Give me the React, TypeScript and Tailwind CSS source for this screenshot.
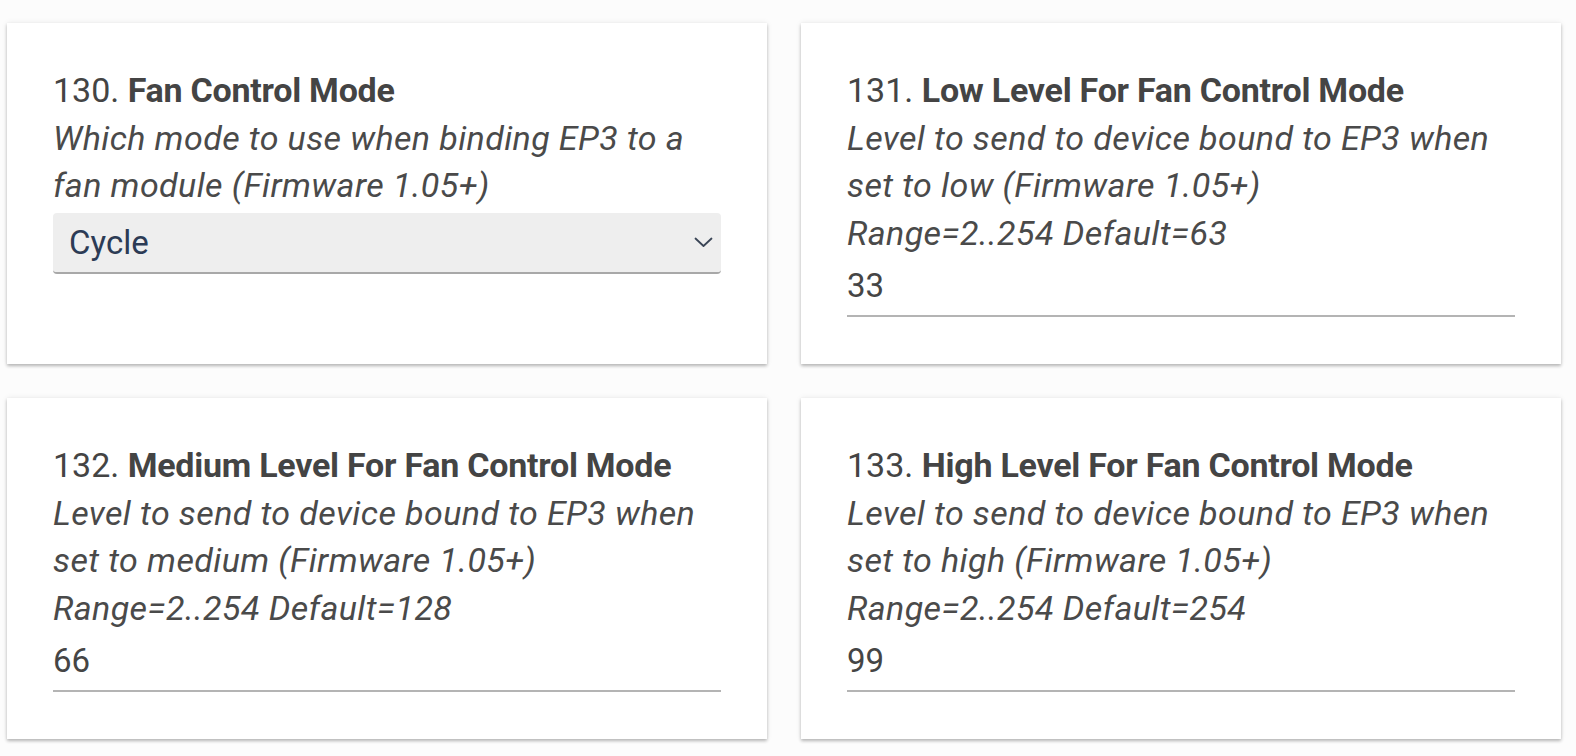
import React from "react";

type Item = {
  num: string;
  title: string;
  desc: string[];
  select?: string;
  value?: string;
};

const items: Item[] = [
  {
    num: "130.",
    title: "Fan Control Mode",
    desc: ["Which mode to use when binding EP3 to a", "fan module (Firmware 1.05+)"],
    select: "Cycle",
  },
  {
    num: "131.",
    title: "Low Level For Fan Control Mode",
    desc: [
      "Level to send to device bound to EP3 when",
      "set to low (Firmware 1.05+)",
      "Range=2..254 Default=63",
    ],
    value: "33",
  },
  {
    num: "132.",
    title: "Medium Level For Fan Control Mode",
    desc: [
      "Level to send to device bound to EP3 when",
      "set to medium (Firmware 1.05+)",
      "Range=2..254 Default=128",
    ],
    value: "66",
  },
  {
    num: "133.",
    title: "High Level For Fan Control Mode",
    desc: [
      "Level to send to device bound to EP3 when",
      "set to high (Firmware 1.05+)",
      "Range=2..254 Default=254",
    ],
    value: "99",
  },
];

function Card({ item }: { item: Item }) {
  return (
    <div className="bg-white shadow-[0_2px_3px_rgba(0,0,0,0.25),0_0_6px_rgba(0,0,0,0.08)] pt-[44px] pb-[47px] px-[46px] text-[34px] leading-[47.7px] text-[#444444]">
      <div className="whitespace-nowrap">
        <span className="font-normal">{item.num} </span>
        <span className="font-bold tracking-[-0.25px]">{item.title}</span>
      </div>
      <div className="italic text-[#4a4a4a] tracking-[0.4px]">
        {item.desc.map((d, i) => (
          <div key={i} className="whitespace-nowrap">
            {d}
          </div>
        ))}
      </div>
      {item.select && (
        <div className="mt-[3px] h-[61px] bg-[#eeeeee] rounded-[4px] border-b-2 border-[#a8a8a8] flex items-center justify-between pl-[16px] pr-[8px]">
          <span className="text-[#2c3b55] text-[33px] leading-none">{item.select}</span>
          <svg width="19" height="11" viewBox="0 0 19 11" fill="none">
            <path d="M1.5 1.5 L9.5 9 L17.5 1.5" stroke="#3a4556" strokeWidth="1.8" strokeLinecap="round" strokeLinejoin="round" />
          </svg>
        </div>
      )}
      {item.value && (
        <div className="pt-[4px] pb-[5px] border-b-2 border-[#b4b4b4] text-[33px] leading-[48px] text-[#454545]">
          {item.value}
        </div>
      )}
    </div>
  );
}

export default function App() {
  return (
    <div
      className="w-[1576px] h-[756px] bg-[#fcfcfc] pl-[7px] pt-[23px]"
      style={{ fontFamily: "Roboto, 'Noto Sans', sans-serif" }}
    >
      <div className="grid grid-cols-[760px_760px] gap-x-[34px] gap-y-[34px]">
        {items.map((it) => (
          <Card key={it.num} item={it} />
        ))}
      </div>
    </div>
  );
}
